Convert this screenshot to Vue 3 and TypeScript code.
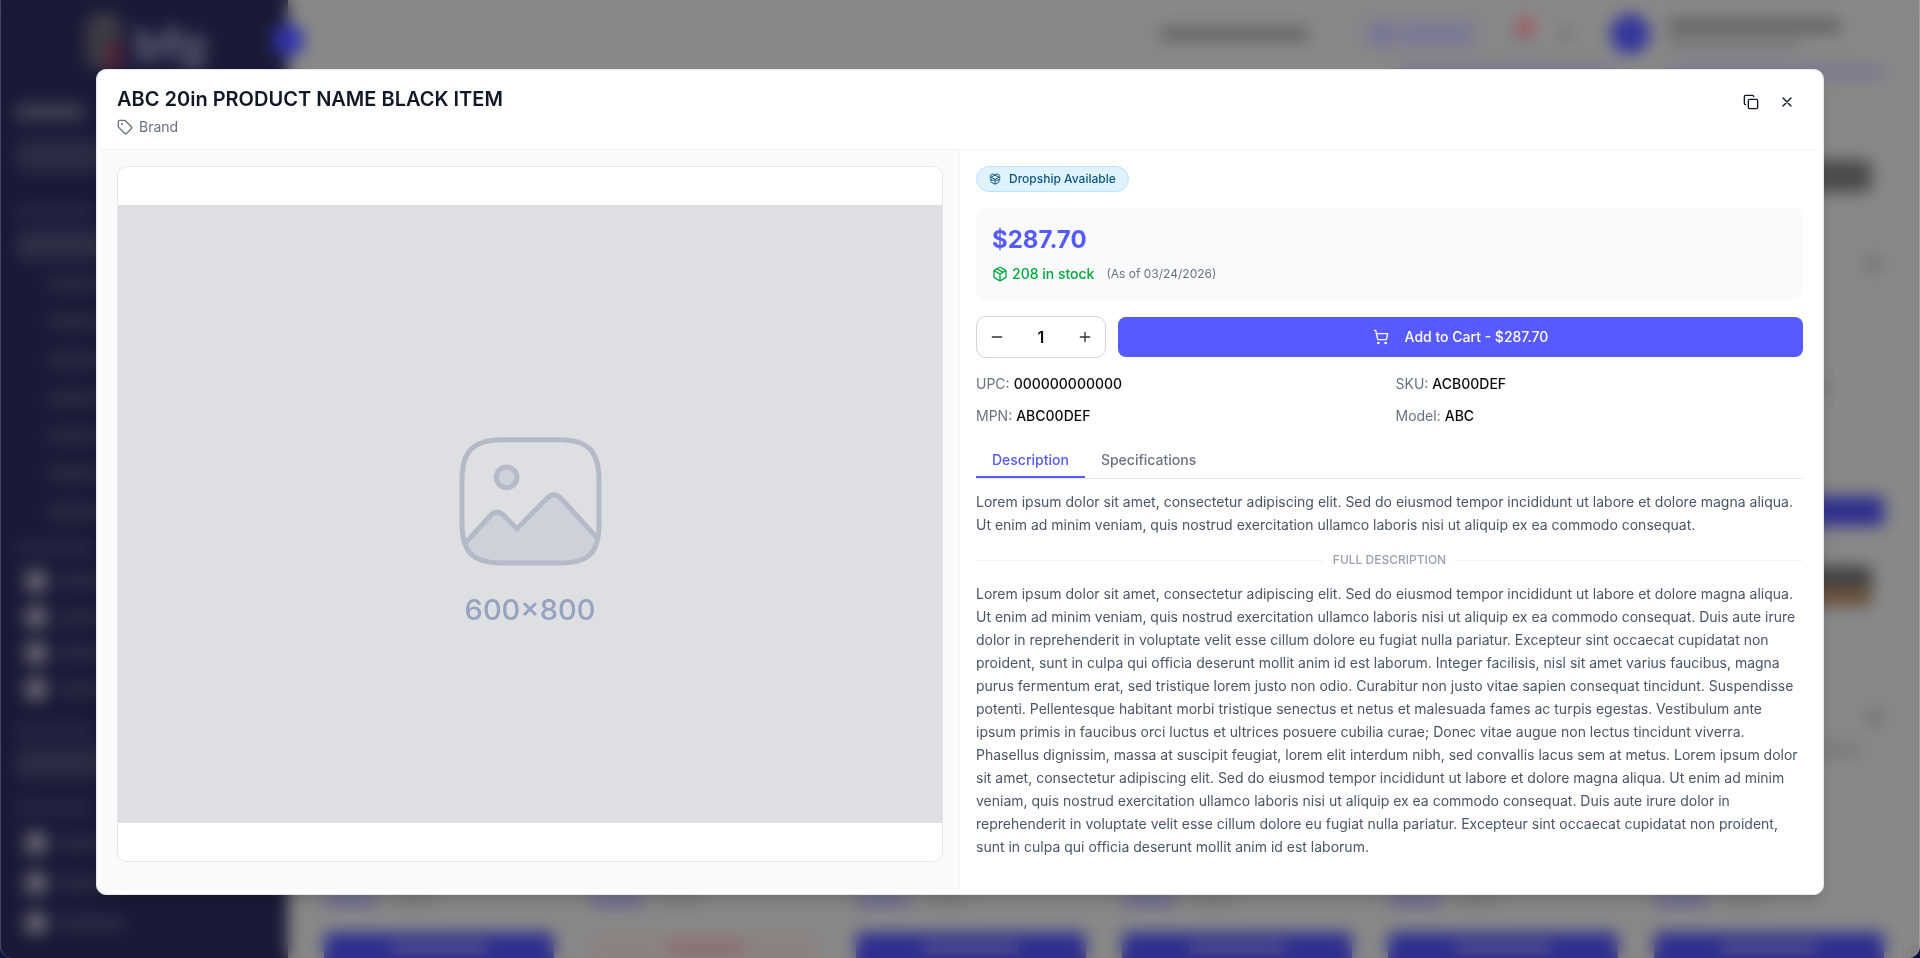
<script setup lang="ts">
import { computed, ref } from 'vue'

const unitPrice = 287.7
const quantity = ref(1)
const activeTab = ref<'description' | 'specifications'>('description')

const price = computed(() => `$${unitPrice.toFixed(2)}`)
const total = computed(() => `$${(unitPrice * quantity.value).toFixed(2)}`)

const details = [
  { label: 'UPC:', value: '000000000000' },
  { label: 'SKU:', value: 'ACB00DEF' },
  { label: 'MPN:', value: 'ABC00DEF' },
  { label: 'Model:', value: 'ABC' },
]

const summary =
  'Lorem ipsum dolor sit amet, consectetur adipiscing elit. Sed do eiusmod tempor incididunt ut labore et dolore magna aliqua. Ut enim ad minim veniam, quis nostrud exercitation ullamco laboris nisi ut aliquip ex ea commodo consequat.'

const fullDescription =
  'Lorem ipsum dolor sit amet, consectetur adipiscing elit. Sed do eiusmod tempor incididunt ut labore et dolore magna aliqua. Ut enim ad minim veniam, quis nostrud exercitation ullamco laboris nisi ut aliquip ex ea commodo consequat. Duis aute irure dolor in reprehenderit in voluptate velit esse cillum dolore eu fugiat nulla pariatur. Excepteur sint occaecat cupidatat non proident, sunt in culpa qui officia deserunt mollit anim id est laborum. Integer facilisis, nisl sit amet varius faucibus, magna purus fermentum erat, sed tristique lorem justo non odio. Curabitur non justo vitae sapien consequat tincidunt. Suspendisse potenti. Pellentesque habitant morbi tristique senectus et netus et malesuada fames ac turpis egestas. Vestibulum ante ipsum primis in faucibus orci luctus et ultrices posuere cubilia curae; Donec vitae augue non lectus tincidunt viverra. Phasellus dignissim, massa at suscipit feugiat, lorem elit interdum nibh, sed convallis lacus sem at metus. Lorem ipsum dolor sit amet, consectetur adipiscing elit. Sed do eiusmod tempor incididunt ut labore et dolore magna aliqua. Ut enim ad minim veniam, quis nostrud exercitation ullamco laboris nisi ut aliquip ex ea commodo consequat. Duis aute irure dolor in reprehenderit in voluptate velit esse cillum dolore eu fugiat nulla pariatur. Excepteur sint occaecat cupidatat non proident, sunt in culpa qui officia deserunt mollit anim id est laborum.'

function changeQuantity(step: number) {
  quantity.value = Math.max(1, Number(quantity.value) + step)
}
</script>

<template>
  <div class="page">
    <div class="shell" aria-hidden="true">
      <aside class="side">
        <div class="logo">
          <span class="logo-mark"><i></i></span>
          <span class="logo-word">bfg</span>
        </div>
        <div class="side-title"></div>
        <div class="side-search"></div>
        <div class="side-label first"></div>
        <div class="side-active"></div>
        <div class="side-links">
          <div v-for="n in 7" :key="n" class="side-link"></div>
        </div>
        <div class="side-label second"></div>
        <div class="side-users">
          <div v-for="n in 4" :key="n" class="side-user"><i></i><b></b></div>
        </div>
        <div class="side-label second"></div>
        <div class="side-search low"></div>
        <div class="side-label second"></div>
        <div class="side-users wide">
          <div v-for="n in 3" :key="n" class="side-user"><i></i><b></b></div>
        </div>
      </aside>
      <div class="toggle"></div>
      <div class="content">
        <div class="topbar">
          <span class="store"></span>
          <span class="pill"><i></i><b></b></span>
          <span class="bell"><i></i></span>
          <span class="dot"></span>
          <span class="avatar"></span>
          <span class="account"><i></i><b></b></span>
        </div>
        <div class="banner"><i></i><i></i></div>
        <div class="grid">
          <div v-for="n in 12" :key="n" class="card">
            <div class="card-img"></div>
            <div class="card-icon"></div>
            <div class="card-text"></div>
            <div class="card-price"><i></i><b></b></div>
            <div class="card-btn" :class="{ out: n === 8 }"><i></i></div>
          </div>
        </div>
      </div>
    </div>

    <div class="scrim">
      <section class="modal" role="dialog" aria-modal="true" aria-labelledby="product-title">
        <header class="head">
          <div class="head-text">
            <h1 id="product-title">ABC 20in PRODUCT NAME BLACK ITEM</h1>
            <p class="brand">
              <svg class="icon" viewBox="0 0 24 24">
                <path d="M12.586 2.586A2 2 0 0 0 11.172 2H4a2 2 0 0 0-2 2v7.172a2 2 0 0 0 .586 1.414l8.704 8.704a2.426 2.426 0 0 0 3.42 0l6.58-6.58a2.426 2.426 0 0 0 0-3.42z" />
                <circle cx="7.5" cy="7.5" r=".5" fill="currentColor" />
              </svg>
              Brand
            </p>
          </div>
          <div class="head-actions">
            <button type="button" aria-label="Copy product">
              <svg class="icon" viewBox="0 0 24 24">
                <rect x="8" y="8" width="14" height="14" rx="2" />
                <path d="M4 16c-1.1 0-2-.9-2-2V4c0-1.1.9-2 2-2h10c1.1 0 2 .9 2 2" />
              </svg>
            </button>
            <button type="button" aria-label="Close">
              <svg class="icon" viewBox="0 0 24 24"><path d="M18 6 6 18M6 6l12 12" /></svg>
            </button>
          </div>
        </header>

        <div class="body">
          <div class="gallery">
            <div class="frame">
              <div class="placeholder">
                <svg class="picture" viewBox="57 83 429 387">
                  <path class="hill" d="M75 402 L150 320 Q168 299 188 315 L231 358 L322 266 Q343 246 362 266 L470 384 C464 435 440 461 365 461 H180 C112 461 82 442 75 402Z" />
                  <path class="line" d="M75 402 L150 320 Q168 299 188 315 L231 358 L322 266 Q343 246 362 266 L470 384" />
                  <path class="line" d="M185 91 H360 C445 92 477 127 477 212 V340 C477 428 450 461 360 461 H185 C96 461 66 428 66 340 V212 C66 127 98 92 185 91Z" />
                  <circle class="sun" cx="200" cy="204" r="31" />
                </svg>
                <span class="size">600×800</span>
              </div>
            </div>
          </div>

          <div class="info">
            <span class="badge">
              <svg class="icon small" viewBox="0 0 24 24">
                <path d="M12 22v-9" />
                <path d="M15.17 2.21a1.67 1.67 0 0 1 1.63 0L21 4.57a1.93 1.93 0 0 1 0 3.36L8.82 14.79a1.655 1.655 0 0 1-1.64 0L3 12.43a1.93 1.93 0 0 1 0-3.36z" />
                <path d="M20 13v3.87a2.06 2.06 0 0 1-1.11 1.83l-6 3.08a1.93 1.93 0 0 1-1.78 0l-6-3.08A2.06 2.06 0 0 1 4 16.87V13" />
                <path d="M21 12.43a1.93 1.93 0 0 0 0-3.36L8.83 2.2a1.64 1.64 0 0 0-1.63 0L3 4.57a1.93 1.93 0 0 0 0 3.36l12.18 6.86a1.636 1.636 0 0 0 1.63 0z" />
              </svg>
              Dropship Available
            </span>

            <div class="price-box">
              <div class="price">{{ price }}</div>
              <div class="stock-row">
                <span class="stock">
                  <svg class="icon" viewBox="0 0 24 24">
                    <path d="M11 21.73a2 2 0 0 0 2 0l7-4A2 2 0 0 0 21 16V8a2 2 0 0 0-1-1.73l-7-4a2 2 0 0 0-2 0l-7 4A2 2 0 0 0 3 8v8a2 2 0 0 0 1 1.73z" />
                    <path d="M12 22V12M3.29 7 12 12l8.71-5M7.5 4.27l9 5.15" />
                  </svg>
                  208 in stock
                </span>
                <span class="as-of">(As of 03/24/2026)</span>
              </div>
            </div>

            <div class="buy">
              <div class="qty">
                <button type="button" aria-label="Decrease quantity" @click="changeQuantity(-1)">
                  <svg class="icon" viewBox="0 0 24 24"><path d="M5 12h14" /></svg>
                </button>
                <input v-model="quantity" type="text" inputmode="numeric" aria-label="Quantity" />
                <button type="button" aria-label="Increase quantity" @click="changeQuantity(1)">
                  <svg class="icon" viewBox="0 0 24 24"><path d="M5 12h14M12 5v14" /></svg>
                </button>
              </div>
              <button type="button" class="add">
                <svg class="icon" viewBox="0 0 24 24">
                  <circle cx="8" cy="21" r="1" />
                  <circle cx="19" cy="21" r="1" />
                  <path d="M2.05 2.05h2l2.66 12.42a2 2 0 0 0 2 1.58h9.78a2 2 0 0 0 1.95-1.57l1.65-7.43H5.12" />
                </svg>
                <span>Add to Cart - {{ total }}</span>
              </button>
            </div>

            <dl class="details">
              <div v-for="item in details" :key="item.label">
                <dt>{{ item.label }}</dt>
                <dd>{{ item.value }}</dd>
              </div>
            </dl>

            <div>
              <div class="tabs" role="tablist">
                <button type="button" role="tab" :class="{ active: activeTab === 'description' }" :aria-selected="activeTab === 'description'" @click="activeTab = 'description'">Description</button>
                <button type="button" role="tab" :class="{ active: activeTab === 'specifications' }" :aria-selected="activeTab === 'specifications'" @click="activeTab = 'specifications'">Specifications</button>
              </div>
              <div v-if="activeTab === 'description'" class="copy" role="tabpanel">
                <p>{{ summary }}</p>
                <div class="divider"><span>FULL DESCRIPTION</span></div>
                <p>{{ fullDescription }}</p>
              </div>
            </div>
          </div>
        </div>
      </section>
    </div>
  </div>
</template>

<style>
body {
  margin: 0;
  background: #0b1340;
}
</style>

<style scoped>
* {
  box-sizing: border-box;
}

.page {
  height: 100vh;
  overflow: hidden;
  font-family: Inter, "Liberation Sans", sans-serif;
  font-size: 14px;
  line-height: 20px;
  color: #101828;
}

button,
input {
  font: inherit;
  color: inherit;
  border: 0;
  padding: 0;
  margin: 0;
  background: none;
}

button {
  cursor: pointer;
}

h1,
p,
dl,
dd {
  margin: 0;
}

.icon {
  width: 16px;
  height: 16px;
  flex: none;
  fill: none;
  stroke: currentColor;
  stroke-width: 2;
  stroke-linecap: round;
  stroke-linejoin: round;
}

.icon.small {
  width: 12px;
  height: 12px;
}

/* Application behind the dialog */
.shell {
  display: flex;
  height: 100%;
  overflow: hidden;
  isolation: isolate;
  border-radius: 0 0 12px 12px;
  background: #888;
}

.side {
  width: 288px;
  flex: none;
  display: flex;
  flex-direction: column;
  padding: 12px 16px;
  background: #1a1a37;
}

.side > * {
  flex: none;
}

.logo {
  display: flex;
  gap: 12px;
  height: 88px;
  padding-left: 70px;
}

.logo-mark {
  display: flex;
  align-items: flex-end;
  justify-content: flex-end;
  width: 36px;
  height: 58px;
  border-radius: 16px;
  background: #3c3c45;
}

.logo-mark i {
  width: 16px;
  height: 28px;
  background: #572338;
}

.logo-word {
  font-size: 44px;
  line-height: 64px;
  font-weight: 700;
  color: #66667a;
}

.side-title {
  width: 68px;
  height: 14px;
  margin-top: 5px;
  background: #444654;
}

.side-search {
  height: 32px;
  margin-top: 21px;
  border-radius: 8px;
  background: #2b2b43;
}

.side-label {
  width: 80px;
  height: 10px;
  background: #262b45;
}

.side-label.first {
  margin-top: 35px;
}

.side-label.second {
  margin-top: 24px;
}

.side-active {
  height: 28px;
  margin-top: 14px;
  border-radius: 8px;
  background: #2e2e45;
}

.side-links {
  display: grid;
  gap: 24px;
  padding: 18px 0 0 32px;
}

.side-link {
  width: 160px;
  height: 14px;
  background: #2b2b41;
}

.side-users {
  display: grid;
  gap: 12px;
  padding: 16px 0 0 8px;
}

.side-users.wide {
  gap: 16px;
  padding-top: 18px;
}

.side-user {
  display: flex;
  align-items: center;
  gap: 12px;
}

.side-user i {
  width: 24px;
  height: 24px;
  border-radius: 50%;
  background: #66666f;
}

.side-user b {
  width: 64px;
  height: 12px;
  background: #2d2e44;
}

.side-search.low {
  margin-top: 12px;
}

.toggle {
  width: 32px;
  height: 32px;
  flex: none;
  margin: 24px -16px 0;
  border-radius: 50%;
  background: #3033a8;
  z-index: 1;
}

.content {
  flex: 1;
  min-width: 0;
  padding: 14px 36px 0;
}

.topbar {
  display: flex;
  align-items: center;
  justify-content: flex-end;
  height: 40px;
  padding-right: 44px;
}

.store {
  width: 148px;
  height: 14px;
  background: #636466;
}

.pill {
  display: flex;
  align-items: center;
  gap: 16px;
  width: 118px;
  height: 32px;
  margin-left: 54px;
  padding-left: 14px;
  border-radius: 8px;
  background: #7f7f8d;
}

.pill i {
  width: 12px;
  height: 14px;
  background: #696ba0;
}

.pill b {
  width: 64px;
  height: 12px;
  background: #75779c;
}

.bell {
  width: 20px;
  height: 24px;
  margin-left: 32px;
  background: #7d7d7d;
}

.bell i {
  display: block;
  width: 16px;
  height: 16px;
  margin: -4px 0 0 6px;
  border-radius: 50%;
  background: #b14c58;
}

.dot {
  width: 12px;
  height: 14px;
  margin-left: 28px;
  background: #727474;
}

.avatar {
  width: 40px;
  height: 40px;
  margin-left: 38px;
  border-radius: 50%;
  background: #34369b;
}

.account {
  display: grid;
  gap: 6px;
  margin-left: 18px;
}

.account i {
  width: 172px;
  height: 14px;
  background: #606163;
}

.account b {
  width: 132px;
  height: 10px;
  background: #757779;
}

.banner {
  display: flex;
  justify-content: flex-end;
  gap: 50px;
  height: 16px;
  margin-top: 10px;
}

.banner i {
  width: 218px;
  background: #7a7a91;
}

.grid {
  display: grid;
  grid-template-columns: repeat(6, minmax(0, 1fr));
  gap: 0 36px;
  margin-top: 10px;
}

.card {
  display: flex;
  flex-direction: column;
  height: 436px;
}

.card-img {
  height: 32px;
  margin: 70px 12px 0;
  border-radius: 8px;
  background: #4a4a4a;
}

.card-icon {
  align-self: flex-end;
  width: 20px;
  height: 20px;
  margin-top: 62px;
  border-radius: 50%;
  background: #747678;
}

.card-text {
  width: 76%;
  height: 12px;
  margin-top: 108px;
  background: #777;
}

.card:nth-child(n + 7) .card-img {
  height: 40px;
  margin-top: 40px;
  background: linear-gradient(#414141 50%, #67513c 50%);
}

.card:nth-child(n + 7) .card-icon {
  margin-top: 102px;
}

.card:nth-child(n + 7) .card-text {
  width: 90%;
  margin-top: 16px;
}

.card-price {
  display: flex;
  gap: 16px;
  margin-top: auto;
  height: 14px;
}

.card-price i {
  width: 54px;
  background: #6d6d92;
}

.card-price b {
  width: 40px;
  background: #7b7d7b;
}

.card-btn {
  display: flex;
  align-items: center;
  justify-content: center;
  height: 30px;
  margin-top: 24px;
  border-radius: 6px;
  background: #2e308e;
}

.card-btn i {
  width: 94px;
  height: 12px;
  background: #4b4c8e;
}

.card-btn.out {
  background: #8b8280;
}

.card-btn.out i {
  width: 76px;
  background: #8a6d6e;
}

/* Dialog */
.scrim {
  position: fixed;
  inset: 0;
  display: flex;
  justify-content: center;
  padding: 69px 0 63px;
  border: 1px solid rgba(255, 255, 255, 0.2);
  border-width: 0 1px;
  border-radius: 0 0 12px 12px;
  backdrop-filter: blur(8px);
}

.modal {
  display: flex;
  flex-direction: column;
  width: 90vw;
  padding: 4px;
  border: 1px solid #e5e7eb;
  border-radius: 10px;
  background: #fff;
  box-shadow: 0 8px 16px -4px rgba(0, 0, 0, 0.2);
}

.head {
  display: flex;
  justify-content: space-between;
  padding: 12px 16px;
  border-bottom: 1px solid #f3f4f6;
}

.head h1 {
  font-size: 20px;
  line-height: 26px;
  font-weight: 600;
}

.brand {
  display: flex;
  align-items: center;
  gap: 6px;
  margin-top: 5px;
  color: #6a7282;
}

.head-actions {
  display: flex;
  gap: 4px;
}

.head-actions button {
  display: grid;
  place-items: center;
  width: 32px;
  height: 32px;
  border-radius: 8px;
}

.body {
  flex: 1;
  min-height: 0;
  display: grid;
  grid-template-columns: repeat(2, minmax(0, 1fr));
}

.gallery {
  display: flex;
  padding: 16px 16px 28px;
  border-right: 1px solid #f3f4f6;
  background: #f9fafb;
}

.frame {
  flex: 1;
  display: flex;
  align-items: center;
  overflow: hidden;
  border: 1px solid #e5e7eb;
  border-radius: 10px;
  background: #fff;
}

.placeholder {
  width: 100%;
  aspect-ratio: 4 / 3;
  display: flex;
  flex-direction: column;
  align-items: center;
  justify-content: center;
  gap: 26px;
  padding-top: 37px;
  background: #dedfe3;
}

.picture {
  width: 143px;
  height: 129px;
}

.line,
.sun {
  fill: none;
  stroke: #b5bac8;
  stroke-width: 15;
}

.hill,
.sun {
  fill: #cdd1da;
}

.size {
  font-size: 29px;
  line-height: 36px;
  font-weight: 500;
  color: #94a3bf;
}

.info {
  display: flex;
  flex-direction: column;
  gap: 16px;
  padding: 16px;
}

.badge {
  align-self: flex-start;
  display: flex;
  align-items: center;
  gap: 8px;
  padding: 4px 12px;
  border: 1px solid #b8e6fe;
  border-radius: 13px;
  background: #dff2fe;
  font-size: 12px;
  line-height: 16px;
  font-weight: 500;
  color: #0b5581;
}

.price-box {
  display: grid;
  gap: 8px;
  padding: 16px;
  border-radius: 10px;
  background: #f9fafb;
}

.price {
  font-size: 24px;
  line-height: 32px;
  font-weight: 700;
  color: #575aff;
}

.stock-row,
.stock {
  display: flex;
  align-items: center;
}

.stock-row {
  gap: 12px;
}

.stock {
  gap: 4px;
  font-weight: 500;
  color: #00a63e;
}

.as-of {
  font-size: 12px;
  color: #6a7282;
}

.buy {
  display: flex;
  align-items: center;
  gap: 12px;
}

.qty {
  display: flex;
  border: 1px solid #d1d5dc;
  border-radius: 10px;
  color: #333;
}

.qty button {
  display: grid;
  place-items: center;
  width: 40px;
  height: 40px;
}

.qty input {
  width: 48px;
  text-align: center;
  font-size: 16px;
  font-weight: 600;
  color: #0a0a0a;
}

.add {
  flex: 1;
  display: flex;
  align-items: center;
  justify-content: center;
  gap: 16px;
  height: 40px;
  border-radius: 8px;
  background: #575aff;
  color: #fff;
  font-weight: 500;
}

.details {
  display: grid;
  grid-template-columns: repeat(2, minmax(0, 1fr));
  gap: 12px;
}

.details div {
  display: flex;
  gap: 4px;
}

.details dt {
  color: #6a7282;
}

.details dd {
  font-weight: 500;
  color: #0a0a0a;
}

.tabs {
  display: flex;
  border-bottom: 1px solid #e5e7eb;
}

.tabs button {
  padding: 8px 16px 6px;
  border-bottom: 2px solid transparent;
  font-weight: 500;
  color: #6a7282;
}

.tabs .active {
  border-color: #575aff;
  color: #575aff;
}

.copy {
  padding-top: 11px;
  line-height: 23px;
  color: #4a5565;
}

.divider {
  display: flex;
  align-items: center;
  gap: 9px;
  margin: 16px 0 14px;
  font-size: 12px;
  line-height: 16px;
  font-weight: 500;
  color: #99a1af;
}

.divider::before,
.divider::after {
  content: "";
  flex: 1;
  height: 1px;
  background: #f3f4f6;
}
</style>
